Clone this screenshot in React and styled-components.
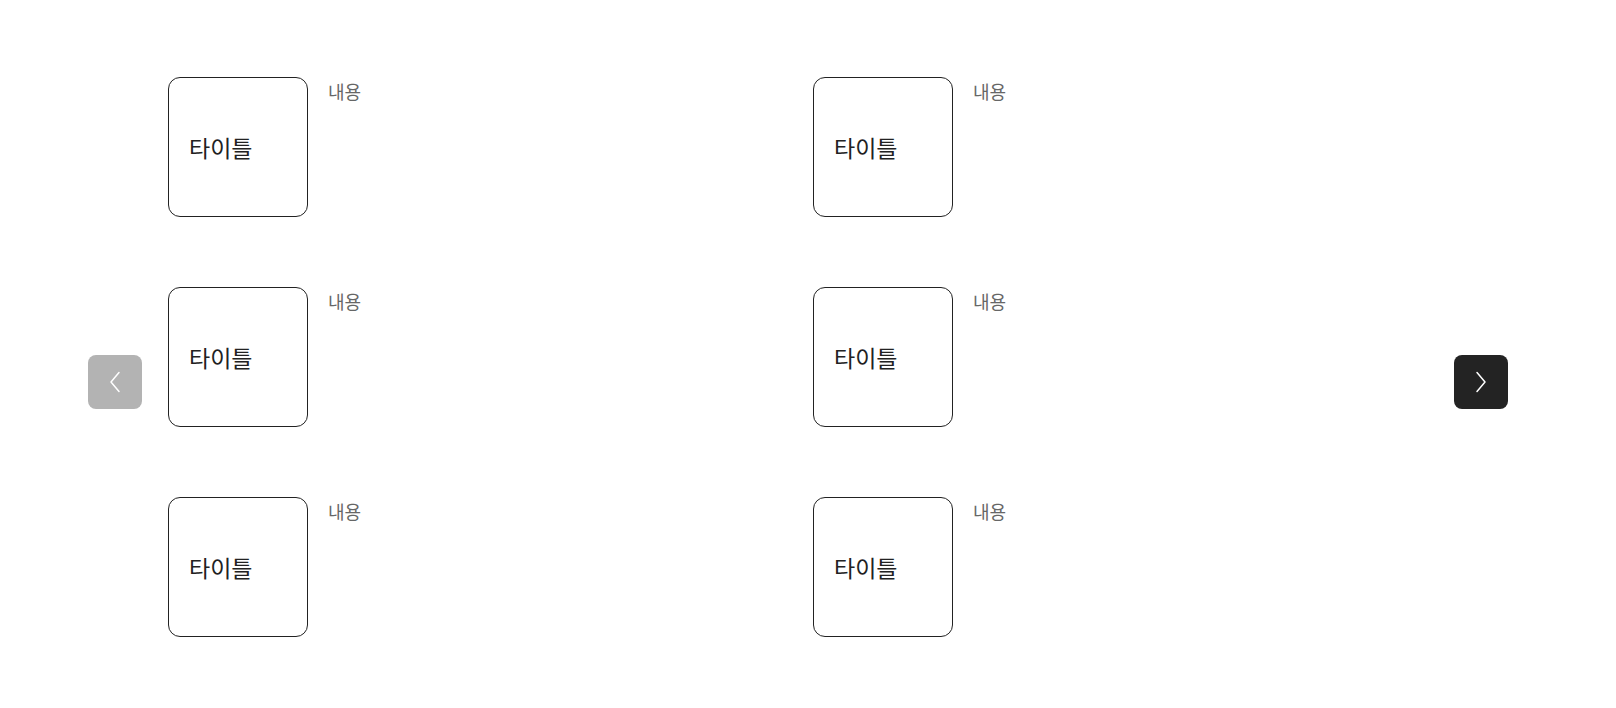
import React from "react";
import styled, { createGlobalStyle } from "styled-components";

const GlobalStyle = createGlobalStyle`
  * { box-sizing: border-box; }
  html, body { margin: 0; padding: 0; background: #fff; }
  body {
    font-family: "Noto Sans CJK KR", "Noto Sans", sans-serif;
    color: #222;
  }
`;

const Page = styled.div`
  height: 708px;
  padding: 77px 0 0 88px;
`;

const Slider = styled.div`
  display: flex;
  align-items: center;
  gap: 26px;
`;

const ArrowButton = styled.button`
  flex: none;
  width: 54px;
  height: 54px;
  margin-top: 50px;
  border: none;
  border-radius: 8px;
  padding: 0;
  display: flex;
  align-items: center;
  justify-content: center;
  background: ${(p) => (p.disabled ? "#b3b3b3" : "#232323")};
  color: #fff;
  cursor: pointer;
`;

const List = styled.div`
  width: 1260px;
  display: grid;
  grid-template-columns: 645px 1fr;
  row-gap: 70px;
`;

const Item = styled.div`
  display: flex;
  align-items: flex-start;
  gap: 20px;
`;

const Card = styled.div`
  width: 140px;
  height: 140px;
  border: 1px solid #222;
  border-radius: 12px;
  display: flex;
  align-items: center;
  padding-left: 20px;
  font-size: 23px;
  color: #222;
`;

const Content = styled.p`
  margin: 2px 0 0;
  font-size: 18px;
  line-height: 24px;
  color: #666;
`;

const Chevron = ({ dir }) => (
  <svg width="12" height="22" viewBox="0 0 12 22" fill="none">
    <path
      d={dir === "left" ? "M10 1.5 L2 11 L10 20.5" : "M2 1.5 L10 11 L2 20.5"}
      stroke="currentColor"
      strokeWidth="1.5"
      strokeLinecap="round"
      strokeLinejoin="round"
    />
  </svg>
);

const items = Array.from({ length: 6 }, (_, i) => ({ id: i, title: "타이틀", body: "내용" }));

export default function App() {
  return (
    <>
      <GlobalStyle />
      <Page>
        <Slider>
          <ArrowButton disabled aria-label="이전">
            <Chevron dir="left" />
          </ArrowButton>
          <List>
            {items.map((item) => (
              <Item key={item.id}>
                <Card>{item.title}</Card>
                <Content>{item.body}</Content>
              </Item>
            ))}
          </List>
          <ArrowButton aria-label="다음">
            <Chevron dir="right" />
          </ArrowButton>
        </Slider>
      </Page>
    </>
  );
}
